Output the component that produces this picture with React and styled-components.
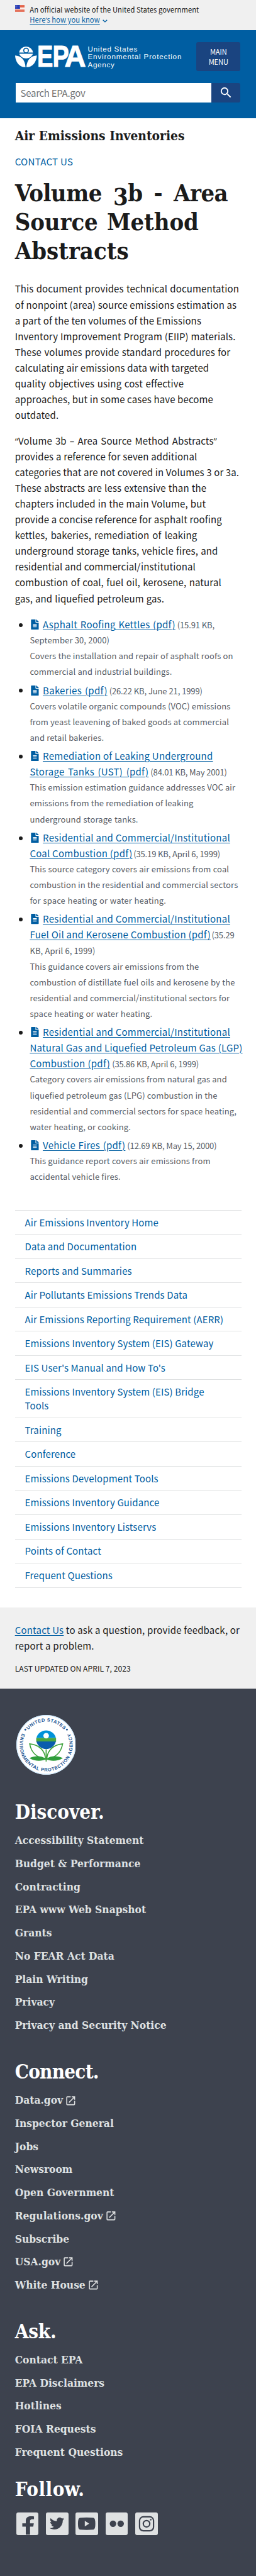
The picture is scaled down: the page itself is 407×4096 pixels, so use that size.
import React from "react";
import styled, { createGlobalStyle } from "styled-components";
import { MdLaunch, MdSearch } from "react-icons/md";
import { FaFileAlt, FaFacebookF, FaTwitter } from "react-icons/fa";

const sans = `"Noto Sans CJK SC", "Noto Sans", sans-serif`;
const serif = `"DejaVu Serif Condensed", "DejaVu Serif", serif`;

const Global = createGlobalStyle`
  * { box-sizing: border-box; }
  body { margin: 0; background: #fff; }
  p, h1, h2, ul { margin: 0; padding: 0; }
  ul { list-style: none; }
`;

const Page = styled.div`
  zoom: 0.987;
  height: 4150px;
  overflow: hidden;
  font-family: ${sans};
  font-size: 15.2px;
  line-height: 25.44px;
  letter-spacing: 0.13px;
  color: #1b1b1b;
  white-space: nowrap;
`;
const Punctuation = styled.span`
  font-family: "Open Sans", "Noto Sans", sans-serif;
  line-height: 0;
`;

const Banner = styled.div`
  display: flex;
  gap: 8px;
  height: 49px;
  padding: 8px 24px 0;
  background: #f0f0f0;
  font-size: 11.4px;
  line-height: 16px;
  letter-spacing: 0.04px;
`;
const Flag = styled.svg`
  width: 16px;
  height: 11px;
`;
const Link = styled.a`
  color: #005ea2;
  text-decoration: underline;
  text-underline-offset: 2px;
  text-decoration-thickness: 1px;
`;
const Chevron = styled.svg`
  width: 8px;
  height: 5px;
  margin-left: 4px;
`;

const Header = styled.header`
  height: 141px;
  padding: 19px 25px 0 24px;
  background: #005ea2;
  color: #fff;
`;
const Brand = styled.div`
  display: flex;
  justify-content: space-between;
`;
const Logo = styled.svg`
  width: 272px;
  height: 42px;
  margin-top: 3px;
  overflow: visible;
`;
const MenuButton = styled.div`
  width: 71px;
  height: 46px;
  padding-top: 8px;
  border-radius: 3px;
  background: #1a4480;
  font-size: 11.3px;
  line-height: 16px;
  letter-spacing: -0.1px;
  text-align: center;
`;
const Search = styled.div`
  display: flex;
  height: 31px;
  margin-top: 20px;
`;
const SearchField = styled.div`
  flex: 1;
  margin-left: 1px;
  padding-left: 8px;
  background: #fff;
  color: #757575;
  line-height: 33px;
  letter-spacing: -0.3px;
`;
const SearchButton = styled.div`
  display: flex;
  align-items: center;
  justify-content: center;
  width: 47px;
  border-radius: 0 3px 3px 0;
  background: #1a4480;
  font-size: 23px;
`;

const Main = styled.main`
  height: 1759px;
  padding: 15px 23px 0 24px;
`;
const SiteTitle = styled.h2`
  font: bold 21.09px/28px ${serif};
  letter-spacing: 0;
`;
const ContactLink = styled.a`
  display: block;
  margin-top: 14px;
  color: #005ea2;
  letter-spacing: 0.3px;
`;
const Title = styled.h1`
  margin: 15px 0 24px;
  font: bold 38.4px/47px ${serif};
`;
const TitleLine = styled.span`
  display: block;
  width: ${(p) => p.$width}px;
  height: 47px;
  letter-spacing: ${(p) => p.$spacing}px;
  text-align-last: justify;
`;
const OldStyle = styled.span`
  position: relative;
  top: 6px;
`;
const Paragraph = styled.p`
  margin-bottom: 15.5px;
`;
const Line = styled.span`
  display: block;
  width: ${(p) => p.$width}px;
  height: 25.44px;
  text-align-last: justify;
`;

const Documents = styled.ul`
  display: flex;
  flex-direction: column;
  gap: 4.2px;
  margin-top: 16.7px;
`;
const Document = styled.li`
  display: flex;
`;
const Bullet = styled.span`
  width: 6px;
  height: 6px;
  margin: 11px 12px 0 6px;
  border-radius: 50%;
  background: #1b1b1b;
`;
const Details = styled.div`
  color: #565c65;
  font-size: 13.2px;
`;
const TitleRow = styled.div`
  display: flex;
  align-items: baseline;
  height: 25.44px;
`;
const DocumentLink = styled(Link)`
  display: block;
  width: ${(p) => p.$width}px;
  font-size: 15.2px;
  letter-spacing: 0.25px;
  text-align-last: justify;
`;
const Meta = styled.span`
  width: ${(p) => p.$width}px;
  margin-left: 3px;
  letter-spacing: -0.15px;
  text-align-last: justify;
`;
const FileIcon = styled(FaFileAlt)`
  width: 13px;
  height: 16.5px;
  margin: 5px 6px 0 2px;
  color: #005ea2;
  align-self: flex-start;
`;

const SideNav = styled.nav`
  width: 365px;
  margin-left: 24px;
  border-top: 1px solid #dfe1e2;
`;
const NavItem = styled.a`
  display: block;
  padding: 8px 16px;
  border-bottom: 1px solid #dfe1e2;
  color: #005ea2;
  line-height: 22.05px;
`;

const Feedback = styled.section`
  height: 131px;
  margin-top: 32px;
  padding: 23px 24px 0;
  background: #f0f0f0;
  letter-spacing: 0.18px;
`;
const Updated = styled.p`
  margin-top: 12.5px;
  font-size: 12.33px;
  letter-spacing: 0;
`;

const Footer = styled.footer`
  height: 1429px;
  padding: 42px 24px 0;
  background: #3d424e;
  letter-spacing: 0;
`;
const Seal = styled.svg`
  display: block;
  width: 96px;
  height: 96px;
  margin: 0 0 41.2px 2px;
`;
const FooterTitle = styled.h2`
  font: bold 31.5px/40px ${serif};
  letter-spacing: ${(p) => p.$spacing}px;
  color: #fff;
`;
const FooterList = styled.ul`
  margin: 6.6px 0 ${(p) => p.$after}px;
`;
const FooterItem = styled.li`
  height: 37.2px;
  font: bold 17.5px/37.2px ${serif};
  color: #dfe1e2;
`;
const External = styled(MdLaunch)`
  width: 19px;
  height: 19px;
  margin-left: 3px;
  vertical-align: -4px;
`;
const Socials = styled.div`
  display: flex;
  gap: 12px;
  margin: 17px 0 0 2px;
`;
const Social = styled.svg`
  width: 36px;
  height: 36px;
  border-radius: 3px;
  background: #dfe1e2;
  color: #3d424e;
`;
const FacebookGlyph = styled(FaFacebookF)`
  width: 22px;
  height: 30px;
`;
const TwitterGlyph = styled(FaTwitter)`
  width: 23.5px;
  height: 23.5px;
`;

const intro = [
  ["This document provides technical documentation", 361],
  ["of nonpoint (area) source emissions estimation as", 353.5],
  ["a part of the ten volumes of the Emissions", 299.5],
  ["Inventory Improvement Program (EIIP) materials.", 355.5],
  ["These volumes provide standard procedures for", 347],
  ["calculating air emissions data with targeted", 312.7],
  ["quality objectives using cost effective", 272],
  ["approaches, but in some cases have become", 317.5],
  ["outdated.", 72.5],
];
const scope = [
  ["“Volume 3b – Area Source Method Abstracts”", 325.5],
  ["provides a reference for seven additional", 293.5],
  ["categories that are not covered in Volumes 3 or 3a.", 358.5],
  ["These abstracts are less extensive than the", 308.5],
  ["chapters included in the main Volume, but", 307.5],
  ["provide a concise reference for asphalt roofing", 333.5],
  ["kettles, bakeries, remediation of leaking", 293.5],
  ["underground storage tanks, vehicle fires, and", 327],
  ["residential and commercial/institutional", 291],
  ["combustion of coal, fuel oil, kerosene, natural", 332.5],
  ["gas, and liquefied petroleum gas.", 240.5],
];
const documents = [
  {
    title: [["Asphalt Roofing Kettles (pdf)", 213.5]],
    meta: ["(15.91 KB,", 60],
    details: [["September 30, 2000)", 125.5], ["Covers the installation and repair of asphalt roofs on", 327.5], ["commercial and industrial buildings.", 218.5]],
  },
  {
    title: [["Bakeries (pdf)", 104]],
    meta: ["(26.22 KB, June 21, 1999)", 150],
    details: [["Covers volatile organic compounds (VOC) emissions", 319.5], ["from yeast leavening of baked goods at commercial", 320], ["and retail bakeries.", 116.5]],
  },
  {
    title: [["Remediation of Leaking Underground", 271.5], ["Storage Tanks (UST) (pdf)", 191.5]],
    meta: ["(84.01 KB, May 2001)", 123],
    details: [["This emission estimation guidance addresses VOC air", 331], ["emissions from the remediation of leaking", 261.5], ["underground storage tanks.", 174.5]],
  },
  {
    title: [["Residential and Commercial/Institutional", 298], ["Coal Combustion (pdf)", 164]],
    meta: ["(35.19 KB, April 6, 1999)", 138.5],
    details: [["This source category covers air emissions from coal", 321], ["combustion in the residential and commercial sectors", 331.5], ["for space heating or water heating.", 219.5]],
  },
  {
    title: [["Residential and Commercial/Institutional", 298], ["Fuel Oil and Kerosene Combustion (pdf)", 290]],
    meta: ["(35.29", 35],
    details: [["KB, April 6, 1999)", 101.5], ["This guidance covers air emissions from the", 272.5], ["combustion of distillate fuel oils and kerosene by the", 330.5], ["residential and commercial/institutional sectors for", 318.5], ["space heating or water heating.", 197.5]],
  },
  {
    title: [["Residential and Commercial/Institutional", 298], ["Natural Gas and Liquefied Petroleum Gas (LGP)", 339.5], ["Combustion (pdf)", 129.5]],
    meta: ["(35.86 KB, April 6, 1999)", 139],
    details: [["Category covers air emissions from natural gas and", 316.5], ["liquefied petroleum gas (LPG) combustion in the", 300.5], ["residential and commercial sectors for space heating,", 332.5], ["water heating, or cooking.", 162.5]],
  },
  {
    title: [["Vehicle Fires (pdf)", 133]],
    meta: ["(12.69 KB, May 15, 2000)", 144],
    details: [["This guidance report covers air emissions from", 290.5], ["accidental vehicle fires.", 145.5]],
  },
];
const navItems = [
  ["Air Emissions Inventory Home"],
  ["Data and Documentation"],
  ["Reports and Summaries"],
  ["Air Pollutants Emissions Trends Data"],
  ["Air Emissions Reporting Requirement (AERR)"],
  ["Emissions Inventory System (EIS) Gateway"],
  ["EIS User's Manual and How To's"],
  ["Emissions Inventory System (EIS) Bridge", "Tools"],
  ["Training"],
  ["Conference"],
  ["Emissions Development Tools"],
  ["Emissions Inventory Guidance"],
  ["Emissions Inventory Listservs"],
  ["Points of Contact"],
  ["Frequent Questions"],
];
const footerGroups = [
  {
    title: "Discover.",
    spacing: 0,
    after: 37.2,
    items: ["Accessibility Statement", "Budget & Performance", "Contracting", "EPA www Web Snapshot", "Grants", "No FEAR Act Data", "Plain Writing", "Privacy", "Privacy and Security Notice"],
  },
  {
    title: "Connect.",
    spacing: -0.75,
    after: 36.8,
    items: ["Data.gov", "Inspector General", "Jobs", "Newsroom", "Open Government", "Regulations.gov", "Subscribe", "USA.gov", "White House"],
  },
  {
    title: "Ask.",
    spacing: -0.2,
    after: 21.8,
    items: ["Contact EPA", "EPA Disclaimers", "Hotlines", "FOIA Requests", "Frequent Questions"],
  },
];
const externalSites = ["Data.gov", "Regulations.gov", "USA.gov", "White House"];

// The CJK face draws these marks full width, so they take a Latin face instead.
const typeset = (text) =>
  text.split(/([“”’–])/).map((part, i) => (i % 2 ? <Punctuation key={i}>{part}</Punctuation> : part));

const Lines = ({ lines }) => lines.map(([text, width]) => <Line key={text} $width={width}>{typeset(text)}</Line>);

const UsFlag = () => (
  <Flag viewBox="0 0 16 11">
    <rect width="16" height="11" fill="#fff" />
    {[0, 2, 4, 6, 8, 10].map((y) => (
      <rect key={y} y={y} width="16" height="1" fill="#db3e1f" />
    ))}
    <rect width="8" height="6" fill="#1e33b1" />
    {[1, 3, 5].map((y) =>
      [1, 3, 5, 7].map((x) => <circle key={`${x}-${y}`} cx={x - 0.2} cy={y - 0.1} r="0.45" fill="#fff" />)
    )}
  </Flag>
);

const EpaLogo = () => (
  <Logo viewBox="0 0 272 42" fill="#fff">
    <path d="M6.5 13.8a11.3 11.3 0 0 1 22.4 0z" />
    <circle cx="17.7" cy="10.4" r="4.6" fill="#005ea2" />
    <circle cx="17.7" cy="10.4" r="2.9" />
    <path d="M6.6 15.8h22.2c-1 2.5-3 4.5-5 5.8-3.8 2.2-8.4 2.2-12.2 0-2-1.3-4-3.3-5-5.8z" />
    <path d="M0 18.500c9 .5 16 6 16.800 18.800C7 38 .5 29 0 18.500z" />
    <path d="M35 18.500c-9 .5-16 6-16.800 18.800C28 38 34.500 29 35 18.500z" />
    <g fontFamily="Liberation Sans" fontWeight="700" fontSize="48" stroke="#fff">
      <text transform="translate(35.5 36.5) scale(.8 1)">E</text>
      <text transform="translate(60.4 36.5) scale(.83 1)">P</text>
      <text x="79.5" y="36.5">A</text>
    </g>
    <g fontFamily="Liberation Sans" fontSize="11.8">
      <text x="117" y="12" textLength="80">United States</text>
      <text x="117" y="24.5" textLength="151">Environmental Protection</text>
      <text x="117" y="37.3" textLength="43">Agency</text>
    </g>
  </Logo>
);

const EpaSeal = () => (
  <Seal viewBox="0 0 96 96">
    <defs>
      <path id="arc-top" d="M10.500 48a37.500 37.500 0 0 1 75 0" />
      <path id="arc-bottom" d="M10.600 27.200a42.800 42.800 0 1 0 74.800 0" />
    </defs>
    <circle cx="48" cy="48" r="48" fill="#fff" />
    <circle cx="48" cy="48" r="47.3" fill="none" stroke="#cdeaff" strokeWidth="1.2" />
    <g fontFamily="Liberation Sans" fontSize="7.6" fontWeight="700" fill="#205493">
      <text textAnchor="middle"><textPath href="#arc-top" startOffset="50%" textLength="65">UNITED STATES</textPath></text>
      <text textAnchor="middle"><textPath href="#arc-bottom" startOffset="50%" textLength="172">ENVIRONMENTAL PROTECTION AGENCY</textPath></text>
    </g>
    <circle cx="14.5" cy="23.5" r="1.5" fill="#205493" />
    <circle cx="81.5" cy="23.5" r="1.5" fill="#205493" />
    <path d="M32.300 37a16.200 16.200 0 0 1 31.400 0z" fill="#0092d9" />
    <rect x="32" y="37" width="32" height="6" fill="#4aa63f" />
    <path d="M32.300 42.500h31.400a16.200 16.200 0 0 1-31.400 0z" fill="#0a5cad" />
    <circle cx="48" cy="33.3" r="4.5" fill="#fff" />
    <g fill="none" stroke="#3fa23b" strokeWidth="1.7">
      <path d="M48 55v20" />
      <path d="M47 71C46 57 37 48 21.500 46.500 24 61 34 69 47 71z" />
      <path d="M49 71C50 57 59 48 74.500 46.500 72 61 62 69 49 71z" />
    </g>
    <path d="M48 71c-7-6-18-6-27-1.500C30 75 41 75 48 71zM48 71c7-6 18-6 27-1.500C66 75 55 75 48 71z" fill="#2f9e3b" />
  </Seal>
);

export default function App() {
  return (
    <Page>
      <Global />
      <Banner>
        <UsFlag />
        <div>
          An official website of the United States government
          <br />
          <Link>{typeset("Here’s how you know")}</Link>
          <Chevron viewBox="0 0 8 5" fill="none" stroke="#005ea2" strokeWidth="1.5">
            <path d="M.7.8 4 3.900 7.300.8" />
          </Chevron>
        </div>
      </Banner>
      <Header>
        <Brand>
          <EpaLogo />
          <MenuButton>MAIN<br />MENU</MenuButton>
        </Brand>
        <Search>
          <SearchField>Search EPA.gov</SearchField>
          <SearchButton><MdSearch /></SearchButton>
        </Search>
      </Header>
      <Main>
        <SiteTitle>Air Emissions Inventories</SiteTitle>
        <ContactLink>CONTACT US</ContactLink>
        <Title>
          <TitleLine $width={343} $spacing={-0.5}>Volume <OldStyle>3</OldStyle>b - Area</TitleLine>
          <TitleLine $width={296} $spacing={-0.1}>Source Method</TitleLine>
          <TitleLine $width={185} $spacing={0}>Abstracts</TitleLine>
        </Title>
        <Paragraph><Lines lines={intro} /></Paragraph>
        <Paragraph><Lines lines={scope} /></Paragraph>
        <Documents>
          {documents.map((doc, i) => (
            <Document key={i}>
              <Bullet />
              <Details>
                {doc.title.map(([text, width], j) => (
                  <TitleRow key={text}>
                    {j === 0 && <FileIcon />}
                    <DocumentLink $width={width}>{text}</DocumentLink>
                    {j === doc.title.length - 1 && <Meta $width={doc.meta[1]}>{doc.meta[0]}</Meta>}
                  </TitleRow>
                ))}
                <Lines lines={doc.details} />
              </Details>
            </Document>
          ))}
        </Documents>
      </Main>
      <SideNav>
        {navItems.map(([first, second]) => (
          <NavItem key={first}>{first}{second && <><br />{second}</>}</NavItem>
        ))}
      </SideNav>
      <Feedback>
        <Link>Contact Us</Link> to ask a question, provide feedback, or<br />report a problem.
        <Updated>LAST UPDATED ON APRIL 7, 2023</Updated>
      </Feedback>
      <Footer>
        <EpaSeal />
        {footerGroups.map((group) => (
          <React.Fragment key={group.title}>
            <FooterTitle $spacing={group.spacing}>{group.title}</FooterTitle>
            <FooterList $after={group.after}>
              {group.items.map((item) => (
                <FooterItem key={item}>
                  {item}
                  {externalSites.includes(item) && <External />}
                </FooterItem>
              ))}
            </FooterList>
          </React.Fragment>
        ))}
        <FooterTitle $spacing={0.5}>Follow.</FooterTitle>
        <Socials>
          <Social viewBox="0 0 36 36"><FacebookGlyph x="8" y="6" preserveAspectRatio="none" /></Social>
          <Social viewBox="0 0 36 36"><TwitterGlyph x="6" y="6" /></Social>
          <Social viewBox="0 0 36 36" fill="currentColor">
            <path d="M7 8.500Q18 7.500 29 8.500q3 .5 3 9.500t-3 9.500q-11 1-22 0-3-.5-3-9.500t3-9.500zM15 13.500v9l7-4.500z" fillRule="evenodd" />
          </Social>
          <Social viewBox="0 0 36 36" fill="currentColor"><circle cx="11.8" cy="18" r="5.2" /><circle cx="24.2" cy="18" r="5.2" /></Social>
          <Social viewBox="0 0 36 36" fill="none" stroke="currentColor" strokeWidth="2.2">
            <rect x="7" y="7" width="22.5" height="22.5" rx="6" />
            <circle cx="18.2" cy="18.2" r="5.2" />
            <circle cx="25" cy="11.7" r="1.3" fill="currentColor" stroke="none" />
          </Social>
        </Socials>
      </Footer>
    </Page>
  );
}
